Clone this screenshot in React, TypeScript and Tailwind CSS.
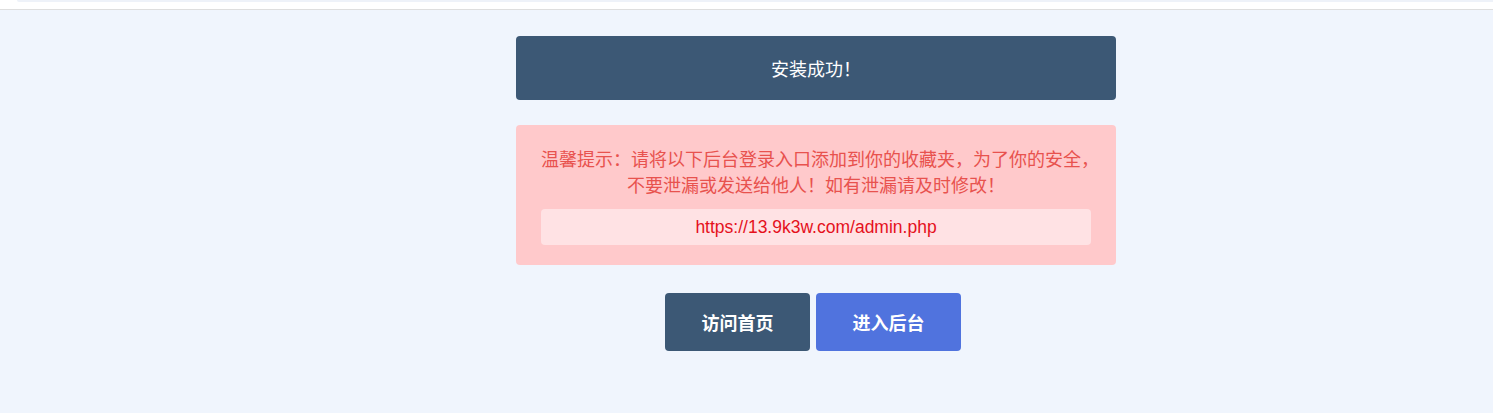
const font = { fontFamily: '"Noto Sans CJK SC", "Liberation Sans", sans-serif' };

export default function App() {
  return (
    <div className="min-h-screen bg-[#f0f5fd]" style={font}>
      {/* Header strip */}
      <div className="h-[10px] bg-white border-b border-[#dedede]">
        <div className="h-[2px] ml-[17px] bg-[#eef2f9] rounded-bl-[4px]" />
      </div>

      <div className="ml-[516px] w-[600px] pt-[26px]">
        {/* Success banner */}
        <div className="h-[64px] rounded-[4px] bg-[#3c5875] flex items-center justify-center text-white text-[18px]">
          安装成功！
        </div>

        {/* Warning */}
        <div className="mt-[25px] rounded-[4px] bg-[#ffc9cb] px-[25px] pt-[20px] pb-[20px] text-center">
          <p className="text-[18px] leading-[26px] text-[#e8524e]">
            <span className="block whitespace-nowrap">温馨提示：请将以下后台登录入口添加到你的收藏夹，为了你的安全，</span>
            <span className="block whitespace-nowrap">不要泄漏或发送给他人！如有泄漏请及时修改！</span>
          </p>
          <div
            className="mt-[12px] h-[36px] rounded-[4px] bg-[#ffe2e4] flex items-center justify-center text-[17.5px] text-[#e5111c]"
            style={{ fontFamily: '"Liberation Sans", Arial, sans-serif' }}
          >
            https://13.9k3w.com/admin.php
          </div>
        </div>

        {/* Actions */}
        <div className="mt-[28px] flex justify-center gap-[6px] pr-[6px]">
          <button className="w-[145px] h-[58px] rounded-[4px] bg-[#3c5875] text-white text-[18px] font-bold">
            访问首页
          </button>
          <button className="w-[145px] h-[58px] rounded-[4px] bg-[#5073de] text-white text-[18px] font-bold">
            进入后台
          </button>
        </div>
      </div>
    </div>
  );
}
